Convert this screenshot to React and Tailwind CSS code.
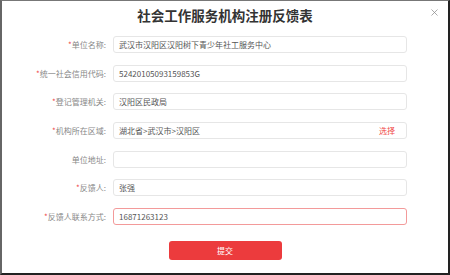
import React from 'react';
import { X } from 'lucide-react';

const rows = [
    { label: '单位名称', required: true, value: '武汉市汉阳区汉阳树下青少年社工服务中心' },
    { label: '统一社会信用代码', required: true, value: '52420105093159853G' },
    { label: '登记管理机关', required: true, value: '汉阳区民政局' },
    { label: '机构所在区域', required: true, value: '湖北省>武汉市>汉阳区', pick: true },
    { label: '单位地址', required: false, value: '' },
    { label: '反馈人', required: true, value: '张强' },
    { label: '反馈人联系方式', required: true, value: '16871263123', error: true },
];

const App = () => {
    return (
        <div
            className="relative w-[450px] h-[275px] bg-white border-l-2 border-t border-r-2 border-b-2 border-l-[#666] border-t-[#777] border-r-[#222] border-b-[#222] overflow-hidden"
            style={{ fontFamily: '"Noto Sans CJK SC", "Noto Sans", sans-serif' }}
        >
            {/* Header */}
            <div className="h-[35px] pt-[5px] text-center">
                <h1 className="text-[13.5px] leading-[18px] font-bold text-[#333]">社会工作服务机构注册反馈表</h1>
            </div>
            <button className="absolute top-[6px] right-[8px] text-[#8a8a8a]">
                <X className="w-[11px] h-[11px]" strokeWidth={1.6} />
            </button>

            {/* Form */}
            <div className="flex flex-col gap-[11.7px]">
                {rows.map((row, index) => (
                    <div key={index} className="flex items-center">
                        <div className="w-[106px] pr-[2px] text-right text-[8px] leading-[17px] text-[#888] whitespace-nowrap">
                            {row.required && <span className="text-[#f04848]">*</span>}
                            {row.label}:
                        </div>
                        <div
                            className={`ml-[5px] w-[294px] h-[17px] rounded-[3px] border flex items-center justify-between pl-[5px] pr-[11px] ${
                                row.error ? 'border-[#f39a9a]' : 'border-[#e6e6e6]'
                            }`}
                        >
                            <span className="text-[8px] leading-[15px] text-[#555] whitespace-nowrap">{row.value}</span>
                            {row.pick && <span className="text-[8px] leading-[15px] text-[#f04848]">选择</span>}
                        </div>
                    </div>
                ))}
            </div>

            {/* Submit */}
            <div className="mt-[16px] flex justify-center">
                <button className="w-[113px] h-[19px] rounded-[3px] bg-[#ec3b3d] text-white text-[8px] leading-[19px]">
                    提交
                </button>
            </div>
        </div>
    );
};

export default App;
